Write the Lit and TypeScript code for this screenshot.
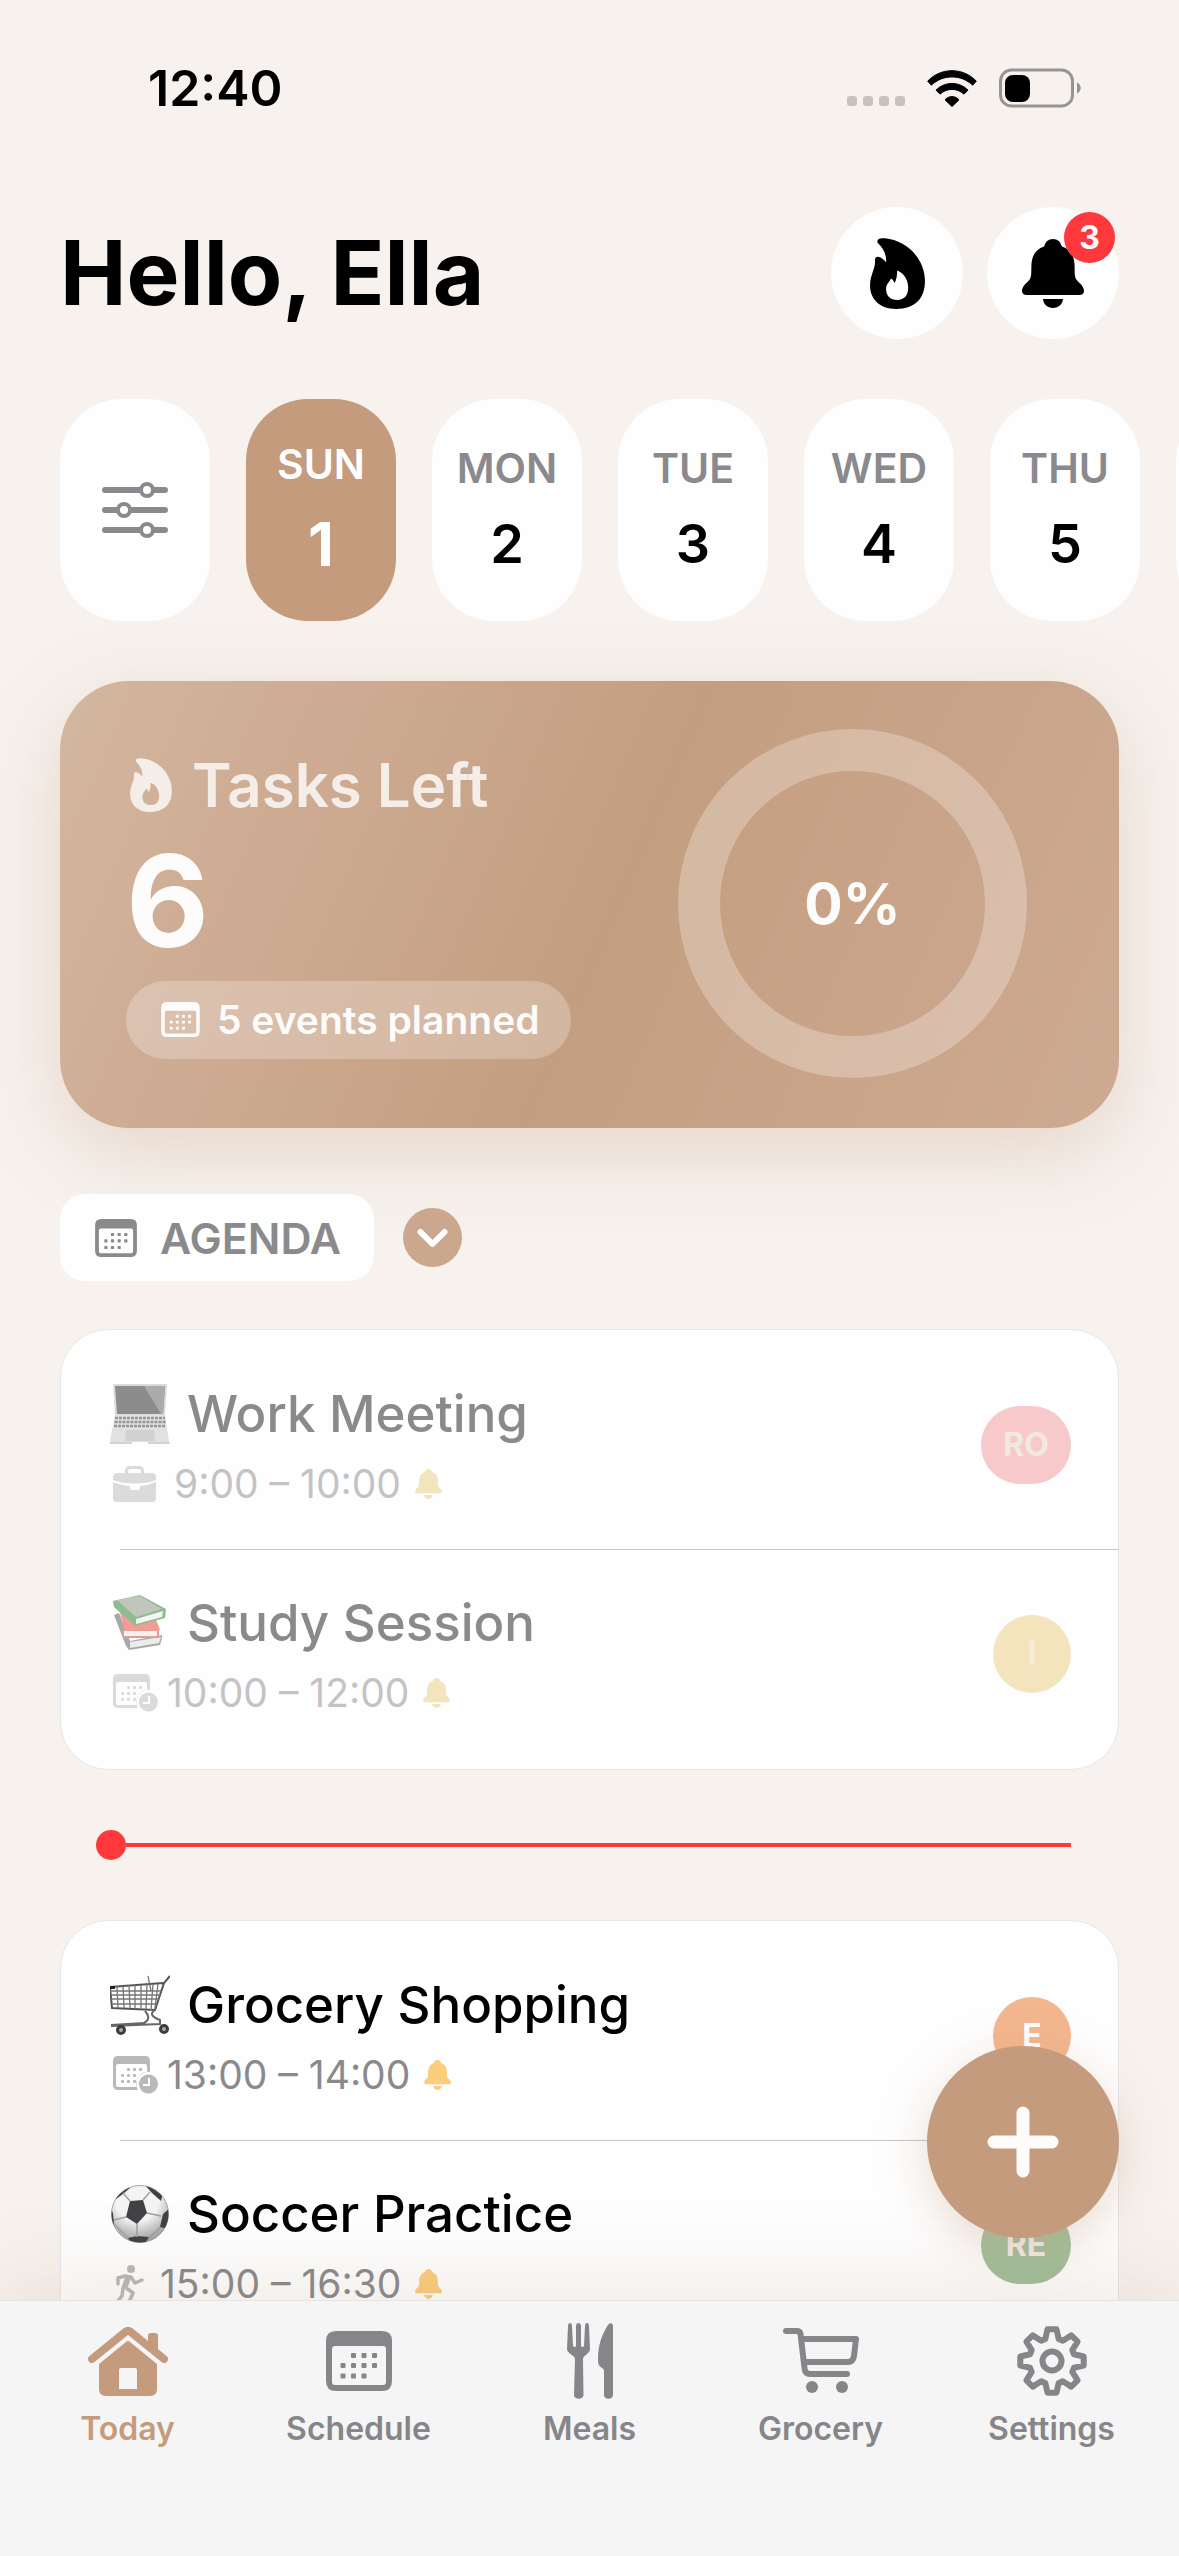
import { css, html, svg, LitElement, TemplateResult } from 'lit';
import { customElement, property, state } from 'lit/decorators.js';
import { classMap } from 'lit/directives/class-map.js';
import { map } from 'lit/directives/map.js';

interface AgendaEvent {
  title: string;
  time: string;
  art: string;
  kind: string;
  who: string;
  tone: string;
}

const DAYS = [
  { name: 'SUN', date: 1 },
  { name: 'MON', date: 2 },
  { name: 'TUE', date: 3 },
  { name: 'WED', date: 4 },
  { name: 'THU', date: 5 },
  { name: 'FRI', date: 6 },
];

const PAST: AgendaEvent[] = [
  { title: 'Work Meeting', time: '9:00 – 10:00', art: 'laptop', kind: 'briefcase', who: 'RO', tone: 'red' },
  { title: 'Study Session', time: '10:00 – 12:00', art: 'books', kind: 'calendarClock', who: 'I', tone: 'yellow' },
];

const UPCOMING: AgendaEvent[] = [
  { title: 'Grocery Shopping', time: '13:00 – 14:00', art: 'trolley', kind: 'calendarClock', who: 'E', tone: 'orange' },
  { title: 'Soccer Practice', time: '15:00 – 16:30', art: 'ball', kind: 'runner', who: 'RE', tone: 'green' },
];

const TABS = [
  { label: 'Today', icon: 'house' },
  { label: 'Schedule', icon: 'calendar' },
  { label: 'Meals', icon: 'cutlery' },
  { label: 'Grocery', icon: 'cart' },
  { label: 'Settings', icon: 'gear' },
];

// Eight teeth, each one a trapezium between the two radii
function gearPoints() {
  const points: string[] = [];
  const add = (deg: number, r: number) => {
    const a = (deg * Math.PI) / 180;
    points.push(`${(35 + r * Math.sin(a)).toFixed(1)},${(35 - r * Math.cos(a)).toFixed(1)}`);
  };
  for (let k = 0; k < 8; k++) {
    add(k * 45 - 17, 23);
    add(k * 45 - 8, 32);
    add(k * 45 + 8, 32);
    add(k * 45 + 17, 23);
  }
  return points.join(' ');
}

const dots = (cells: number[][], size: number) =>
  cells.map(([x, y]) => svg`<rect x=${x} y=${y} width=${size} height=${size} rx="1" />`);

const ICONS: Record<string, { box: string; body: TemplateResult | unknown }> = {
  wifi: {
    box: '0 0 150 110',
    body: svg`<g fill="currentColor" stroke="currentColor" stroke-width="3" stroke-linejoin="round">
      <path d="M2 33C42 -9 108 -9 148 33L137 45C102 12 48 12 13 45Z" />
      <path d="M27 60C53 33 97 33 123 60L111 72C91 53 59 53 39 72Z" />
      <path d="M54 89C66 76 84 76 96 89L75 109Z" /></g>`,
  },
  battery: {
    box: '0 0 82 40',
    body: svg`<rect x="1.5" y="2" width="72" height="36" rx="11" fill="none" stroke="#979594" stroke-width="3" />
      <rect x="6" y="7" width="25" height="27" rx="8" fill="#000" />
      <path d="M78 14.500C83 17 83 23 78 25.500Z" fill="#979594" />`,
  },
  flame: {
    box: '0 0 164 212',
    body: svg`<path fill="currentColor" fill-rule="evenodd" d="M22 12C22 2 30 0 44 1C108 6 164 62 164 128C164 180 136 212 78 212C28 212 0 182 0 142C0 108 17 94 15 64C15 55 24 54 31 58C38 62 44 67 48 73C50 48 38 30 26 18C23 15 22 14 22 12ZM81 97C104 106 114 128 114 148C114 172 102 185 81 185C60 185 48 172 48 152C48 138 57 132 61 124C62 121 64 121 66 123C69 126 72 130 73 135C79 124 81 112 81 97Z" />`,
  },
  bell: {
    box: '0 0 186 207',
    body: svg`<path fill="currentColor" d="M93 0C79 0 70 9 67 22C38 32 28 54 28 85C28 104 28 112 24 120C17 131 0 140 0 156C0 164 6 168 14 168H172C180 168 186 164 186 156C186 140 169 131 162 120C158 112 158 104 158 85C158 54 148 32 119 22C116 9 107 0 93 0ZM63 180H123C121 196 110 207 93 207C76 207 65 196 63 180Z" />`,
  },
  sliders: {
    box: '0 0 66 56',
    body: svg`<g fill="none" stroke="currentColor" stroke-linecap="round">
      <path stroke-width="6" d="M3 8H63M3 28H63M3 48H63" />
      <g fill="#fff" stroke-width="4"><circle cx="45" cy="8" r="6" /><circle cx="22" cy="28" r="6" /><circle cx="45" cy="48" r="6" /></g></g>`,
  },
  calendar: {
    box: '0 0 66 60',
    body: svg`<g fill="currentColor">
      <path fill-rule="evenodd" d="M10 0H56Q66 0 66 10V50Q66 60 56 60H10Q0 60 0 50V10Q0 0 10 0ZM9 15Q6 15 6 18V51Q6 54 9 54H57Q60 54 60 51V18Q60 15 57 15Z" />
      ${dots([[25, 22], [35.500, 22], [46, 22], [14.500, 32], [25, 32], [35.500, 32], [46, 32], [14.500, 42.500], [25, 42.500], [35.500, 42.500]], 5)}</g>`,
  },
  calendarClock: {
    box: '0 0 45 38',
    body: svg`<g fill="currentColor">
      <path fill-rule="evenodd" d="M5 0H32Q37 0 37 5V16A12 12 0 0 0 25 34H5Q0 34 0 29V5Q0 0 5 0ZM5 8Q3 8 3 10V29Q3 31 5 31H24A12 12 0 0 1 34 16V10Q34 8 32 8Z" />
      ${dots([[14, 12], [20, 12], [26, 12], [8, 18], [14, 18], [20, 18], [8, 24], [14, 24], [20, 24]], 3)}
      <path fill-rule="evenodd" d="M35.500 18.500A9.500 9.500 0 1 1 35.400 18.500ZM35 22V28H30V30H37V22Z" /></g>`,
  },
  briefcase: {
    box: '0 0 43 36',
    body: svg`<path d="M13.500 8V5Q13.500 1.500 17 1.500H26Q29.500 1.500 29.500 5V8" fill="none" stroke="currentColor" stroke-width="3" />
      <path fill="currentColor" d="M4 7H39Q43 7 43 11V14Q34 17.500 21.500 17.500Q9 17.500 0 14V11Q0 7 4 7ZM0 16Q7 19 17 20V22Q17 24 19 24H25Q27 24 27 22V20Q36 19 43 16V32Q43 36 39 36H4Q0 36 0 32Z" />`,
  },
  runner: {
    box: '0 0 29 39',
    body: svg`<circle cx="16" cy="4" r="4" fill="currentColor" />
      <g fill="none" stroke="currentColor" stroke-width="3.500" stroke-linecap="round" stroke-linejoin="round">
      <path d="M3 19V13L10 11L16 12L20 18L27 15" /><path d="M8 23L7 31L2 37" /><path stroke-width="6" d="M13 13L10 21" /><path d="M10 22L18 28L14 37" /></g>`,
  },
  chevron: {
    box: '0 0 31 20',
    body: svg`<path d="M3.500 4L15.500 16L27.500 4" fill="none" stroke="currentColor" stroke-width="6" stroke-linecap="round" stroke-linejoin="round" />`,
  },
  plus: {
    box: '0 0 72 72',
    body: svg`<path d="M36 7V65M7 36H65" fill="none" stroke="currentColor" stroke-width="13" stroke-linecap="round" />`,
  },
  house: {
    box: '0 0 80 70',
    body: svg`<path d="M60 24V10Q60 7 63 7H67Q70 7 70 10V30Z" fill="currentColor" />
      <path d="M4 33L38 5.500Q40 4 42 5.500L76 33" fill="none" stroke="currentColor" stroke-width="8" stroke-linecap="round" />
      <path fill="currentColor" fill-rule="evenodd" d="M38 16Q40 14 42 16L69 38V63Q69 70 62 70H18Q11 70 11 63V38ZM33 42Q31 42 31 44V63H49V44Q49 42 47 42Z" />`,
  },
  cutlery: {
    box: '0 0 46 76',
    body: svg`<g fill="currentColor">
      <path d="M1 3C1 -1 5 -1 5 3L6 23Q8 25 9 23V3C9 -1 14 -1 14 3V23Q15 25 17 23L18 3C18 -1 22 -1 22 3L23 26C23 31 16 32 16 36L16.500 72C16.500 77 7 77 7 72L8 36C8 32 0 31 0 26Z" />
      <path d="M46 3C46 0 43 -1 41 2C35 11 31 22 31 36C31 42 32 43 35 45Q37 46 37 48V72C37 77 46 77 46 72Z" /></g>`,
  },
  cart: {
    box: '0 0 76 66',
    body: svg`<g fill="none" stroke="currentColor" stroke-width="6" stroke-linecap="round" stroke-linejoin="round">
      <path d="M3 3H14Q17 3 17.500 6L21.500 40Q22 46 27 46H64" /><path d="M19 11H73L71 28Q70 34 65 34H22" /></g>
      <g fill="currentColor"><circle cx="29" cy="59" r="6" /><circle cx="59" cy="59" r="6" /></g>`,
  },
  gear: {
    box: '0 0 70 70',
    body: svg`<g fill="none" stroke="currentColor" stroke-width="6" stroke-linejoin="round"><polygon points=${gearPoints()} /><circle cx="35" cy="35" r="9.500" /></g>`,
  },
  laptop: {
    box: '0 0 60 60',
    body: svg`<path d="M3 0H57L55 31H5Z" fill="#b9babb" /><path d="M5 2H55L53 30H7Z" fill="#1c1c1e" /><path d="M34 2H55L53 30H51Z" fill="#5b5b5d" />
      <path d="M5 31H55L59 57V60H0V57Z" fill="#c4c5c5" />
      <path d="M5 34H55M4.500 38H55.500M4 42H56" stroke="#303032" stroke-width="2.500" stroke-dasharray="3 1" />
      <path d="M16 46H44L45 57H15Z" fill="#a5a6a5" /><path d="M0 59H60" stroke="#898a8b" stroke-width="1" /><path d="M22 59H38" stroke="#fff" stroke-width="2" />`,
  },
  books: {
    box: '0 0 60 60',
    body: svg`<path d="M4 22L9 20L20 48L52 42L52 45L50 52L19 57L16 53Z" fill="#55555a" /><path d="M20 49L51 44L49 50L20 55Z" fill="#dcdcda" />
      <path d="M10 20L45 24L50 37L15 38Z" fill="#ea3d2f" /><path d="M12 37H49V45H13Z" fill="#c9412d" /><path d="M14 38H47V43H14Z" fill="#ece8e6" />
      <path d="M3 8L30 2L56 16L55 25L25 33L4 14Z" fill="#1f7d25" /><path d="M7 7L30 3L52 16L26 24Z" fill="#849078" /><path d="M26 26L53 18L52 24L26 31Z" fill="#ececea" />`,
  },
  trolley: {
    box: '0 0 60 60',
    body: svg`<g fill="none" stroke="#77777a" stroke-width="1.300">
      <path d="M60 1L54 8L45 35L2 33L0 12L53 8" stroke-width="2" stroke="#555" />
      <path d="M0 16H51M1 20H50M1 24H49M2 29H47M7 11L8 33M13 11L14 33M19 10L20 33M25 10L25 34M31 10V34M37 9L36 34M43 9L41 35M48 9L45 33M38 1L41 16" />
      <path d="M35 36Q42 44 34 48L1 50M45 35Q37 40 50 45V49L1 51" stroke="#66666a" stroke-width="2" /></g>
      <path d="M0 11H5V14H0Z" fill="#222" />
      <g fill="#aaa" stroke="#3c3c3e" stroke-width="3"><circle cx="11" cy="55" r="3.500" /><circle cx="54" cy="54" r="3.500" /></g>`,
  },
  ball: {
    box: '0 0 60 60',
    body: svg`<defs><radialGradient id="ball-shade" cx="45%" cy="25%" r="75%"><stop offset="0.500" stop-color="#f4f4f4" /><stop offset="1" stop-color="#9c9c9e" /></radialGradient><clipPath id="ball-clip"><circle cx="30" cy="30" r="28.500" /></clipPath></defs>
      <circle cx="30" cy="30" r="28.500" fill="url(#ball-shade)" stroke="#a7a7a8" />
      <g clip-path="url(#ball-clip)">
        <path d="M20 17L33 16L37 29L27 40L16 33ZM3 14L11 2L20 4L13 10L6 15ZM34 0L53 9L51 17L42 9ZM60 24L53 30L50 43L58 45ZM0 24L3 29L4 40L0 43ZM18 54L27 52L39 53L34 61H22Z" fill="#424246" />
        <path d="M20 17L13 9M33 16L40 8M37 29L51 32M27 40L27 53M16 33L4 36M4 40Q12 48 18 54M39 53Q47 48 50 43" fill="none" stroke="#a0a0a2" stroke-width="1.500" />
      </g>`,
  },
};

function icon(name: string) {
  const { box, body } = ICONS[name];
  return html`<svg class="icon ${name}" viewBox=${box} aria-hidden="true">${body}</svg>`;
}

const iconStyles = css`
  .icon {
    display: block;
    flex: none;
  }
`;

const controls = css`
  button {
    appearance: none;
    border: 0;
    margin: 0;
    padding: 0;
    color: inherit;
    font: inherit;
    cursor: pointer;
  }
`;

@customElement('agenda-list')
export class AgendaList extends LitElement {
  static override styles = [
    iconStyles,
    css`
      :host {
        display: block;
      }
      .list {
        list-style: none;
        margin: 0;
        padding: 11px 0;
        background: #fefefe;
        border: 1px solid #e7e6e6;
        border-radius: 48px;
      }
      .row {
        position: relative;
        display: flex;
        align-items: center;
        justify-content: space-between;
        height: 208px;
        padding: 0 47px 0 49px;
      }
      .row + .row {
        padding-top: 1px;
      }
      .row + .row::before {
        content: '';
        position: absolute;
        top: 0;
        left: 59px;
        right: -1px;
        height: 1px;
        background: #c6c6c8;
      }
      .text {
        display: flex;
        flex-direction: column;
        gap: 10px;
        padding-top: 8px;
      }
      .title {
        display: flex;
        align-items: center;
        gap: 17px;
        margin: 0;
        font-size: 51px;
        line-height: 60px;
        font-weight: 500;
        color: #000;
      }
      .art .icon {
        width: 60px;
        height: 60px;
      }
      .meta {
        display: flex;
        align-items: center;
        gap: 14px;
        padding-left: 3px;
        font-size: 39px;
        line-height: 60px;
        color: #8a8a8e;
      }
      .when {
        display: flex;
        align-items: center;
        gap: 9px;
      }
      .when .icon {
        color: #b9b9ba;
      }
      .briefcase {
        width: 43px;
        height: 36px;
        margin-right: 9px;
      }
      .calendarClock {
        width: 45px;
        height: 38px;
      }
      .runner {
        width: 29px;
        height: 39px;
        margin: 0 7px 0 2px;
      }
      .bell {
        width: 27px;
        height: 30px;
        color: #fbcd7c;
      }
      .avatar {
        display: grid;
        place-items: center;
        box-sizing: border-box;
        min-width: 78px;
        height: 78px;
        border-radius: 39px;
        color: #fff;
        font-size: 32px;
        line-height: 40px;
        font-weight: 700;
      }
      .avatar.wide {
        min-width: 90px;
      }
      .red {
        background: #f39697;
      }
      .yellow {
        background: #ebcc80;
      }
      .orange {
        background: #f3b68e;
      }
      .green {
        background: #a1c09b;
        color: #f6f0ed;
      }
      .past .title,
      .past .meta {
        color: #8a8a8d;
      }
      .past .art,
      .past .meta,
      .past .avatar {
        opacity: 0.5;
      }
      .past .bell {
        color: #ebcc80;
      }
      .past .avatar {
        color: #e5d6c5;
      }
      .past .yellow {
        color: #f1dcb4;
      }
    `,
  ];

  @property({ type: Array })
  events: AgendaEvent[] = [];

  @property({ type: Boolean })
  past = false;

  override render() {
    return html`
      <ul class=${classMap({ list: true, past: this.past })}>
        ${map(
          this.events,
          (event) => html`
            <li class="row">
              <div class="text">
                <h2 class="title"><span class="art">${icon(event.art)}</span>${event.title}</h2>
                <div class="meta">
                  <span class="when">${icon(event.kind)}${event.time}</span>
                  ${icon('bell')}
                </div>
              </div>
              <span class="avatar ${event.tone} ${event.who.length > 1 ? 'wide' : ''}">${event.who}</span>
            </li>
          `
        )}
      </ul>
    `;
  }
}

@customElement('app-root')
export class AppRoot extends LitElement {
  static override styles = [
    iconStyles,
    controls,
    css`
      :host {
        display: flex;
        flex-direction: column;
        height: 100vh;
        overflow: hidden;
        background: #f7f2ee;
        color: #000;
        font-family: Inter, 'Liberation Sans', sans-serif;
      }
      main {
        flex: 1;
        min-height: 0;
        overflow: hidden;
      }

      .status {
        display: flex;
        align-items: center;
        justify-content: space-between;
        padding: 58px 98px 0 148px;
        font-size: 50px;
        line-height: 60px;
        font-weight: 600;
      }
      .signals {
        display: flex;
        align-items: center;
        gap: 22px;
      }
      .cell {
        display: flex;
        gap: 6px;
        align-self: flex-end;
        padding-bottom: 2px;
      }
      .cell i {
        width: 10px;
        height: 10px;
        border-radius: 3px;
        background: #c6c2bf;
      }
      .wifi {
        width: 50px;
        height: 37px;
      }
      .battery {
        width: 82px;
        height: 40px;
      }

      .header {
        display: flex;
        align-items: center;
        justify-content: space-between;
        padding: 89px 60px 0;
      }
      h1 {
        margin: 0;
        font-size: 89px;
        line-height: 108px;
        font-weight: 700;
      }
      .actions {
        display: flex;
        gap: 24px;
      }
      .round {
        position: relative;
        display: grid;
        place-items: center;
        width: 132px;
        height: 132px;
        border-radius: 50%;
        background: #fefefe;
      }
      .round .flame {
        width: 55px;
        height: 71px;
      }
      .round .bell {
        width: 62px;
        height: 69px;
      }
      .badge {
        position: absolute;
        top: 5px;
        right: 4px;
        width: 51px;
        height: 51px;
        border-radius: 50%;
        background: #ff383c;
        color: #fff;
        font-size: 32px;
        line-height: 51px;
        font-weight: 700;
        text-align: center;
      }

      .days {
        display: flex;
        gap: 36px;
        padding: 60px 0 0 60px;
        overflow: hidden;
      }
      .day {
        flex: none;
        display: flex;
        flex-direction: column;
        align-items: center;
        justify-content: center;
        gap: 20px;
        width: 150px;
        height: 222px;
        border-radius: 62px;
        background: #fefefe;
      }
      .day .name {
        font-size: 41px;
        line-height: 48px;
        font-weight: 600;
        color: #8a8a8e;
      }
      .day .date {
        font-size: 54px;
        line-height: 64px;
        font-weight: 600;
      }
      .day.selected {
        background: #c49b7d;
        color: #fff;
      }
      .day.selected .name {
        color: #fff;
      }
      .day.selected .date {
        font-size: 60px;
        line-height: 72px;
        font-weight: 700;
      }
      .sliders {
        width: 66px;
        height: 56px;
        color: #8a8a8e;
      }

      .summary {
        display: flex;
        align-items: center;
        justify-content: space-between;
        margin: 60px 60px 0;
        padding: 48px 92px 50px 66px;
        border-radius: 69px;
        background: linear-gradient(113deg, #d3b7a0 0%, #cfad95 18%, #c49e80 52%, #ceaa92 100%);
        box-shadow: 0 24px 80px rgba(196, 155, 125, 0.32);
        color: #fdfcfb;
      }
      .counts {
        display: flex;
        flex-direction: column;
        align-items: flex-start;
        gap: 20px;
      }
      .counts h2 {
        display: flex;
        align-items: center;
        gap: 20px;
        margin: 0;
        padding-left: 4px;
        font-size: 60px;
        line-height: 72px;
        font-weight: 600;
        color: #f5eee8;
      }
      .counts .flame {
        width: 42px;
        height: 54px;
      }
      .left {
        font-size: 128px;
        line-height: 120px;
        font-weight: 700;
      }
      .planned {
        display: flex;
        align-items: center;
        gap: 17px;
        padding: 0 31px 0 35px;
        border-radius: 39px;
        background: rgba(255, 255, 255, 0.25);
        font-size: 39px;
        line-height: 78px;
        font-weight: 600;
      }
      .planned .calendar {
        width: 39px;
        height: 35px;
      }
      .ring {
        display: grid;
        place-items: center;
        box-sizing: border-box;
        width: 349px;
        height: 349px;
        border: 42px solid rgba(255, 255, 255, 0.27);
        border-radius: 50%;
        font-size: 57px;
        font-weight: 700;
      }

      .agenda {
        display: flex;
        align-items: center;
        gap: 29px;
        padding: 66px 60px 48px;
      }
      .filter {
        display: flex;
        align-items: center;
        gap: 23px;
        height: 87px;
        padding: 0 33px 0 35px;
        border-radius: 25px;
        background: #fefefe;
        color: #8a8a8d;
        font-size: 43px;
        font-weight: 600;
      }
      .filter .calendar {
        width: 42px;
        height: 38px;
      }
      .toggle {
        display: grid;
        place-items: center;
        width: 59px;
        height: 59px;
        border-radius: 50%;
        background: #cba78e;
        color: #fff;
      }
      .chevron {
        width: 31px;
        height: 20px;
      }
      agenda-list {
        margin: 0 60px;
      }
      .now {
        display: flex;
        align-items: center;
        margin: 60px 108px 60px 96px;
      }
      .now .dot {
        width: 30px;
        height: 30px;
        border-radius: 50%;
        background: #ff383c;
      }
      .now .line {
        flex: 1;
        height: 4px;
        background: #ff383c;
      }

      .dock {
        position: relative;
      }
      .tabs {
        display: grid;
        grid-template-columns: repeat(5, 1fr);
        padding: 20px 12px 107px;
        border-top: 1px solid #e6e5e4;
        background: #f5f5f5;
        box-shadow: 0 0 100px rgba(150, 115, 85, 0.2);
      }
      .tab {
        display: flex;
        flex-direction: column;
        align-items: center;
        gap: 8px;
        color: #86868a;
        font-size: 32px;
        line-height: 40px;
        font-weight: 600;
        text-decoration: none;
      }
      .tab.current {
        color: #c49b7d;
      }
      .glyph {
        display: grid;
        place-items: center;
        height: 80px;
      }
      .house {
        width: 80px;
        height: 70px;
      }
      .tab .calendar {
        width: 66px;
        height: 60px;
      }
      .cutlery {
        width: 46px;
        height: 76px;
      }
      .cart {
        width: 76px;
        height: 66px;
      }
      .gear {
        width: 70px;
        height: 70px;
      }
      .add {
        position: absolute;
        right: 60px;
        bottom: calc(100% + 62px);
        display: grid;
        place-items: center;
        width: 192px;
        height: 192px;
        border-radius: 50%;
        background: #c49b7d;
        box-shadow: 0 12px 48px rgba(196, 155, 125, 0.35);
        color: #fdfcfb;
      }
      .plus {
        width: 72px;
        height: 72px;
      }
    `,
  ];

  @state()
  private _day = 1;

  @state()
  private _tab = 'Today';

  override render() {
    return html`
      <main>
        <div class="status">
          <span>12:40</span>
          <div class="signals">
            <span class="cell"><i></i><i></i><i></i><i></i></span>
            ${icon('wifi')} ${icon('battery')}
          </div>
        </div>

        <header class="header">
          <h1>Hello, Ella</h1>
          <div class="actions">
            <button class="round" aria-label="Streak">${icon('flame')}</button>
            <button class="round" aria-label="Notifications">${icon('bell')}<span class="badge">3</span></button>
          </div>
        </header>

        <div class="days">
          <button class="day" aria-label="Filter">${icon('sliders')}</button>
          ${map(
            DAYS,
            (day) => html`
              <button
                class=${classMap({ day: true, selected: day.date === this._day })}
                @click=${() => (this._day = day.date)}
              >
                <span class="name">${day.name}</span>
                <span class="date">${day.date}</span>
              </button>
            `
          )}
        </div>

        <section class="summary">
          <div class="counts">
            <h2>${icon('flame')}Tasks Left</h2>
            <span class="left">6</span>
            <span class="planned">${icon('calendar')}5 events planned</span>
          </div>
          <div class="ring">0%</div>
        </section>

        <div class="agenda">
          <button class="filter">${icon('calendar')}AGENDA</button>
          <button class="toggle" aria-label="Collapse">${icon('chevron')}</button>
        </div>

        <agenda-list past .events=${PAST}></agenda-list>
        <div class="now"><span class="dot"></span><span class="line"></span></div>
        <agenda-list .events=${UPCOMING}></agenda-list>
      </main>

      <div class="dock">
        <nav class="tabs">
          ${map(
            TABS,
            (tab) => html`
              <a
                href="#${tab.label.toLowerCase()}"
                class=${classMap({ tab: true, current: tab.label === this._tab })}
                @click=${() => (this._tab = tab.label)}
              >
                <span class="glyph">${icon(tab.icon)}</span>
                ${tab.label}
              </a>
            `
          )}
        </nav>
        <button class="add" aria-label="Add">${icon('plus')}</button>
      </div>
    `;
  }
}

declare global {
  interface HTMLElementTagNameMap {
    'agenda-list': AgendaList;
    'app-root': AppRoot;
  }
}
